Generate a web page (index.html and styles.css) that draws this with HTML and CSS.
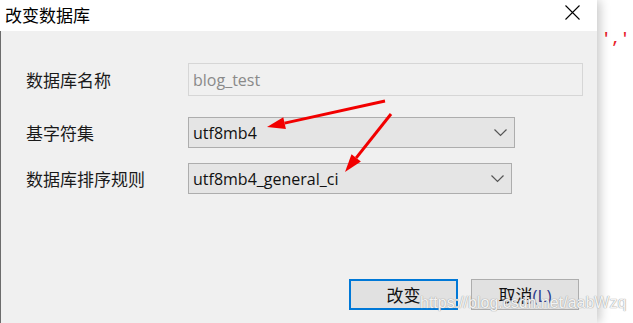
FILE: index.html
```html
<!DOCTYPE html>
<html lang="zh-CN">
<head>
  <meta charset="UTF-8">
  <title>改变数据库</title>
  <link rel="stylesheet" href="styles.css">
</head>
<body>
  <div class="code-bg">','</div>

  <div class="dialog">
    <div class="titlebar">
      <span class="title">改变数据库</span>
      <svg class="close" width="15" height="15" viewBox="0 0 15 15">
        <path d="M0.5 0.5 L14.5 14.5 M14.5 0.5 L0.5 14.5" stroke="#000" stroke-width="1.1" fill="none"/>
      </svg>
    </div>

    <div class="content">
      <div class="row row-name">
        <label>数据库名称</label>
        <div class="field field-disabled">blog_test</div>
      </div>
      <div class="row row-charset">
        <label>基字符集</label>
        <div class="field select select-charset">
          <span>utf8mb4</span>
          <svg class="chevron" width="13" height="8" viewBox="0 0 13 8"><path d="M0.5 0.5 L6.5 6.5 L12.5 0.5" stroke="#555" stroke-width="1.2" fill="none"/></svg>
        </div>
      </div>
      <div class="row row-collation">
        <label>数据库排序规则</label>
        <div class="field select select-collation">
          <span>utf8mb4_general_ci</span>
          <svg class="chevron" width="13" height="8" viewBox="0 0 13 8"><path d="M0.5 0.5 L6.5 6.5 L12.5 0.5" stroke="#555" stroke-width="1.2" fill="none"/></svg>
        </div>
      </div>

      <div class="buttons">
        <button class="btn btn-default">改变</button>
        <button class="btn">取消<span class="hotkey">(L)</span></button>
      </div>
    </div>

    <!-- annotation arrows drawn over the dialog -->
    <svg class="arrows" width="597" height="323" viewBox="0 0 597 323">
      <line x1="385" y1="101" x2="284.6" y2="123.1" stroke="#f20000" stroke-width="3"/>
      <polygon points="267,127 283.3,117.2 285.9,129" fill="#f20000"/>
      <line x1="391" y1="114" x2="356.2" y2="157.9" stroke="#f20000" stroke-width="3"/>
      <polygon points="345,172 351.5,154.2 360.9,161.6" fill="#f20000"/>
    </svg>
  </div>

  <div class="watermark">https://blog.csdn.net/aabWzq</div>
</body>
</html>
```

FILE: styles.css
```css
body {
  margin: 0;
  padding: 0;
  width: 633px;
  height: 323px;
  overflow: hidden;
  background: #fff;
  position: relative;
  font-family: "Noto Sans CJK SC", "Noto Sans", sans-serif;
}

.code-bg {
  position: absolute;
  left: 602px;
  top: 31px;
  font-family: "Liberation Mono", monospace;
  font-size: 14px;
  font-weight: bold;
  color: #e8202a;
  letter-spacing: 1px;
}

.dialog {
  position: relative;
  width: 597px;
  height: 323px;
  background: #f0f0f0;
  box-shadow: 3px 0 10px rgba(0, 0, 0, 0.22);
}

.titlebar {
  height: 31px;
  background: #fff;
  display: flex;
  align-items: center;
  justify-content: space-between;
  padding: 0 17px 2px 5px;
  box-sizing: border-box;
}

.title {
  font-size: 17px;
  color: #000;
  line-height: 1;
}

.close {
  display: block;
  margin-top: -4px;
}

.content {
  border-left: 1px solid #6c6c6c;
  height: 292px;
  box-sizing: border-box;
  padding-top: 32px;
  padding-left: 25px;
}

.row {
  display: flex;
  align-items: center;
}

.row label {
  width: 162px;
  font-size: 17px;
  color: #1a1a1a;
}

.row-charset {
  margin-top: 21px;
}

.row-collation {
  margin-top: 15px;
}

.field {
  box-sizing: border-box;
  height: 31px;
  display: flex;
  align-items: center;
  padding-left: 4px;
  font-family: "Open Sans", "Noto Sans", sans-serif;
  font-size: 16px;
  color: #111;
}

.field-disabled {
  width: 395px;
  height: 33px;
  border: 1px solid #d6d6d6;
  background: #f0f0f0;
  color: #8a8a8a;
}

.select {
  justify-content: space-between;
  background: #e5e5e5;
  border: 1px solid #adadad;
  padding-right: 7px;
}

.select-charset {
  width: 327px;
}

.select-collation {
  width: 324px;
}

.chevron {
  display: block;
}

.buttons {
  display: flex;
  justify-content: flex-end;
  gap: 13px;
  margin-top: 85px;
  padding-right: 18px;
}

.btn {
  box-sizing: border-box;
  width: 108px;
  height: 31px;
  background: #e1e1e1;
  border: 1px solid #adadad;
  font-family: "Noto Sans CJK SC", sans-serif;
  font-size: 17px;
  color: #111;
  padding: 0;
}

.btn-default {
  width: 109px;
  border: 2px solid #0078d7;
}

.hotkey {
  font-family: "Open Sans", sans-serif;
  color: #2b3a8c;
}

.arrows {
  position: absolute;
  left: 0;
  top: 0;
  pointer-events: none;
}

.watermark {
  position: absolute;
  left: 420px;
  top: 294px;
  font-family: "Liberation Sans", Arial, sans-serif;
  font-size: 16px;
  color: rgba(255, 255, 255, 0.9);
  text-shadow: 0 0 1px #999, 0 0 1px #aaa;
}
```
